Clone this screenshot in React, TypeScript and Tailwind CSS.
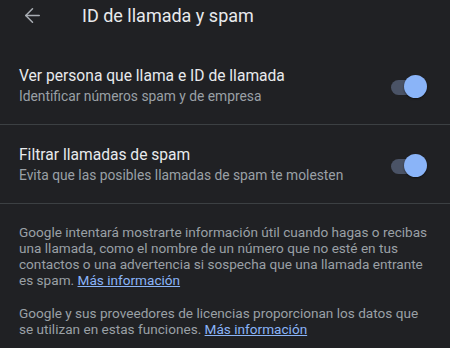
import { ArrowLeft } from 'lucide-react';

function Toggle() {
  return (
    <div className="relative w-[36px] h-[24px] shrink-0">
      <div className="absolute left-0 top-[5px] w-[30px] h-[15px] rounded-full bg-[#4a5366]" />
      <div className="absolute right-0 top-0 w-[23px] h-[23px] rounded-full bg-[#8ab4f8] shadow-[0_1px_2px_rgba(0,0,0,0.5)]" />
    </div>
  );
}

function SettingRow({ title, subtitle }: { title: string; subtitle: string }) {
  return (
    <div className="flex items-center justify-between pl-[19px] pr-[23px] pt-[3px] h-[78px]">
      <div>
        <div className="text-[15.6px] leading-[19px] text-[#e8eaed]">{title}</div>
        <div className="text-[13.8px] leading-[20px] text-[#9aa0a6]">{subtitle}</div>
      </div>
      <Toggle />
    </div>
  );
}

export default function App() {
  return (
    <div className="w-[450px] h-[348px] overflow-hidden bg-[#202124] font-['Roboto',sans-serif]">
      <div className="flex items-center h-[31px]">
        <ArrowLeft className="ml-[21px] w-[23px] h-[23px] text-[#a8adb3]" strokeWidth={1.6} />
        <span className="ml-[38px] text-[18px] text-[#e8eaed]">ID de llamada y spam</span>
      </div>

      <div className="mt-[15px]">
        <SettingRow title="Ver persona que llama e ID de llamada" subtitle="Identificar números spam y de empresa" />
      </div>
      <div className="h-px bg-[#3c4043]" />
      <SettingRow title="Filtrar llamadas de spam" subtitle="Evita que las posibles llamadas de spam te molesten" />
      <div className="h-px bg-[#3c4043]" />

      <div className="px-[19px] pt-[20px] text-[13.6px] leading-[16px] text-[#9aa0a6]">
        <p>
          Google intentará mostrarte información útil cuando hagas o recibas una llamada, como el nombre de un número que no esté en tus contactos o una advertencia si sospecha que una llamada entrante es spam.{' '}
          <a className="inline-block text-[#8ab4f8] underline">Más información</a>
        </p>
        <p className="mt-[17px]">
          Google y sus proveedores de licencias proporcionan los datos que se utilizan en estas funciones.{' '}
          <a className="inline-block text-[#8ab4f8] underline">Más información</a>
        </p>
      </div>
    </div>
  );
}
